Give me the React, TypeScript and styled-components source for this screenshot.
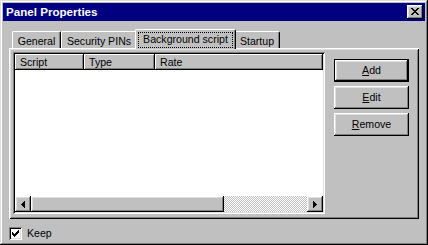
import React from "react";
import styled, { createGlobalStyle, css } from "styled-components";

const Global = createGlobalStyle`
  html, body { margin: 0; padding: 0; background: #c0c0c0; }
  body { font-family: "Liberation Sans", Arial, sans-serif; }
  #root { width: 428px; height: 245px; }
`;

const raised = css`
  box-shadow: inset -1px -1px #000, inset 1px 1px #fff, inset -2px -2px #808080,
    inset 2px 2px #dfdfdf;
`;

const Window = styled.div`
  width: 428px;
  height: 245px;
  box-sizing: border-box;
  padding: 3px;
  background: #c0c0c0;
  box-shadow: inset -1px -1px #000, inset 1px 1px #dfdfdf, inset -2px -2px #808080,
    inset 2px 2px #fff;
  display: flex;
  flex-direction: column;
  font-family: "Liberation Sans", Arial, sans-serif;
  font-size: 10.6px;
  color: #000;
`;

const TitleBar = styled.div`
  height: 18px;
  flex: none;
  background: #000080;
  display: flex;
  align-items: center;
  justify-content: space-between;
  padding: 0 2px 0 3px;
`;

const Title = styled.span`
  color: #fff;
  font-weight: bold;
  font-size: 11.6px;
  line-height: 18px;
  white-space: nowrap;
`;

const CaptionButton = styled.div`
  width: 16px;
  height: 14px;
  box-sizing: border-box;
  background: #c0c0c0;
  ${raised};
  display: flex;
  align-items: flex-start;
  justify-content: flex-start;
  padding: 3px 0 0 4px;
  svg { display: block; }
`;

const Body = styled.div`
  flex: 1;
  display: flex;
  flex-direction: column;
  padding: 8px 6px 0 6px;
`;

const TabStrip = styled.div`
  height: 19px;
  display: flex;
  align-items: flex-end;
  padding-left: 3px;
`;

const Tab = styled.div<{ $w: number; $active?: boolean }>`
  box-sizing: border-box;
  width: ${(p) => p.$w}px;
  height: ${(p) => (p.$active ? 20 : 17)}px;
  margin: 0 ${(p) => (p.$active ? -2 : 0)}px ${(p) => (p.$active ? -1 : 0)}px;
  background: #c0c0c0;
  border-top: 1px solid #fff;
  border-left: 1px solid #fff;
  border-right: 1px solid #000;
  border-radius: 2px 2px 0 0;
  box-shadow: inset -1px 0 #808080;
  display: flex;
  justify-content: center;
  align-items: flex-start;
  padding-top: 3px;
  line-height: 13px;
  white-space: nowrap;
  position: relative;
  z-index: ${(p) => (p.$active ? 2 : 0)};
`;

const FocusLabel = styled.span`
  outline: 1px dotted #000;
  padding: 0 4px 1px;
`;

const TabPanel = styled.div`
  height: 171px;
  flex: none;
  box-sizing: border-box;
  box-shadow: inset 1px 1px #fff, inset -1px -1px #000, inset 2px 2px #dfdfdf,
    inset -2px -2px #808080;
  padding: 4px 10px 5px 4px;
  display: flex;
  gap: 9px;
`;

const ListView = styled.div`
  flex: 1;
  box-sizing: border-box;
  height: 162px;
  padding: 2px;
  background: #fff;
  box-shadow: inset 1px 1px #808080, inset -1px -1px #fff, inset 2px 2px #000,
    inset -2px -2px #dfdfdf;
  display: flex;
  flex-direction: column;
`;

const Header = styled.div`
  height: 16px;
  flex: none;
  display: flex;
`;

const HeaderCell = styled.div<{ $w?: number }>`
  box-sizing: border-box;
  ${(p) => (p.$w ? `width: ${p.$w}px; flex: none;` : "flex: 1;")}
  height: 16px;
  background: #c0c0c0;
  box-shadow: inset -1px -1px #000, inset 1px 1px #fff, inset -2px -2px #808080;
  padding-left: 5px;
  line-height: 16px;
  white-space: nowrap;
`;

const ListBody = styled.div`
  flex: 1;
  background: #fff;
`;

const ScrollBar = styled.div`
  height: 16px;
  flex: none;
  display: flex;
`;

const ScrollButton = styled.div`
  width: 16px;
  height: 16px;
  flex: none;
  box-sizing: border-box;
  background: #c0c0c0;
  ${raised};
  display: flex;
  align-items: center;
  justify-content: center;
  svg { display: block; }
`;

const Thumb = styled.div`
  width: 193px;
  flex: none;
  background: #c0c0c0;
  ${raised};
`;

const Track = styled.div`
  flex: 1;
  background-color: #c0c0c0;
  background-image: conic-gradient(#c0c0c0 25%, #fff 25% 50%, #c0c0c0 50% 75%, #fff 75%);
  background-size: 2px 2px;
`;

const ButtonColumn = styled.div`
  width: 75px;
  flex: none;
  display: flex;
  flex-direction: column;
  gap: 4px;
  padding-top: 7px;
`;

const PushButton = styled.div<{ $default?: boolean }>`
  width: 75px;
  height: 23px;
  box-sizing: border-box;
  background: #c0c0c0;
  display: flex;
  align-items: center;
  justify-content: center;
  line-height: 13px;
  ${(p) =>
    p.$default
      ? css`
          box-shadow: inset 0 0 0 1px #000, inset -2px -2px #000, inset 2px 2px #fff,
            inset -3px -3px #808080, inset 3px 3px #dfdfdf;
        `
      : raised}
  u { text-decoration: underline; text-underline-offset: 1px; }
`;

const Footer = styled.div`
  flex: 1;
  display: flex;
  align-items: flex-start;
  gap: 5px;
  padding-top: 8px;
  padding-left: 0;
`;

const CheckBox = styled.div`
  width: 13px;
  height: 13px;
  box-sizing: border-box;
  background: #fff;
  box-shadow: inset 1px 1px #808080, inset -1px -1px #fff, inset 2px 2px #000,
    inset -2px -2px #dfdfdf;
  padding: 3px;
  svg { display: block; }
`;

const CheckLabel = styled.span`
  line-height: 13px;
`;

const CloseGlyph = () => (
  <svg width="8" height="7" viewBox="0 0 8 7" shapeRendering="crispEdges">
    <path
      fill="#000"
      d="M0 0h2v1H0zM6 0h2v1H6zM1 1h2v1H1zM5 1h2v1H5zM2 2h4v1H2zM3 3h2v1H3zM2 4h4v1H2zM1 5h2v1H1zM5 5h2v1H5zM0 6h2v1H0zM6 6h2v1H6z"
    />
  </svg>
);

const LeftArrow = () => (
  <svg width="4" height="7" viewBox="0 0 4 7" shapeRendering="crispEdges">
    <path fill="#000" d="M3 0h1v7H3zM2 1h1v5H2zM1 2h1v3H1zM0 3h1v1H0z" />
  </svg>
);

const RightArrow = () => (
  <svg width="4" height="7" viewBox="0 0 4 7" shapeRendering="crispEdges">
    <path fill="#000" d="M0 0h1v7H0zM1 1h1v5H1zM2 2h1v3H2zM3 3h1v1H3z" />
  </svg>
);

const CheckMark = () => (
  <svg width="7" height="7" viewBox="0 0 7 7" shapeRendering="crispEdges">
    <path
      fill="#000"
      d="M6 0h1v1H6zM5 1h2v1H5zM0 2h1v1H0zM4 2h3v1H4zM0 3h2v1H0zM3 3h3v1H3zM0 4h5v1H0zM1 5h3v1H1zM2 6h1v1H2z"
    />
  </svg>
);

export default function App() {
  return (
    <>
      <Global />
      <Window>
        <TitleBar>
          <Title>Panel Properties</Title>
          <CaptionButton>
            <CloseGlyph />
          </CaptionButton>
        </TitleBar>
        <Body>
          <TabStrip>
            <Tab $w={49}>General</Tab>
            <Tab $w={76}>Security PINs</Tab>
            <Tab $w={101} $active>
              <FocusLabel>Background script</FocusLabel>
            </Tab>
            <Tab $w={46}>Startup</Tab>
          </TabStrip>
          <TabPanel>
            <ListView>
              <Header>
                <HeaderCell $w={69}>Script</HeaderCell>
                <HeaderCell $w={71}>Type</HeaderCell>
                <HeaderCell>Rate</HeaderCell>
              </Header>
              <ListBody />
              <ScrollBar>
                <ScrollButton>
                  <LeftArrow />
                </ScrollButton>
                <Thumb />
                <Track />
                <ScrollButton>
                  <RightArrow />
                </ScrollButton>
              </ScrollBar>
            </ListView>
            <ButtonColumn>
              <PushButton $default>
                <span>
                  <u>A</u>dd
                </span>
              </PushButton>
              <PushButton>
                <span>
                  <u>E</u>dit
                </span>
              </PushButton>
              <PushButton>
                <span>
                  <u>R</u>emove
                </span>
              </PushButton>
            </ButtonColumn>
          </TabPanel>
          <Footer>
            <CheckBox>
              <CheckMark />
            </CheckBox>
            <CheckLabel>Keep</CheckLabel>
          </Footer>
        </Body>
      </Window>
    </>
  );
}
